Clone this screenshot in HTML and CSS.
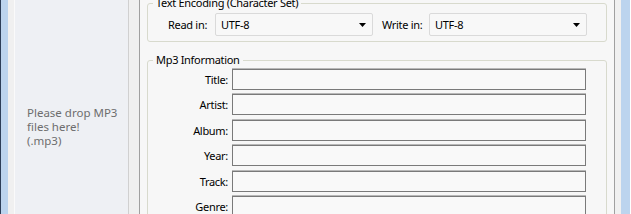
FILE: index.html
```html
<!DOCTYPE html>
<html lang="en">
<head>
    <meta charset="UTF-8">
    <title>MP3 Tag Editor</title>
    <link rel="stylesheet" href="styles.css">
</head>
<body>
    <div class="frame-left"></div>

    <div class="drop-area">
        <div class="drop-panel">
            <p>Please drop MP3<br>files here!<br>(.mp3)</p>
        </div>
    </div>

    <div class="main">
        <fieldset class="group encoding">
            <legend>Text Encoding (Character Set)</legend>
            <div class="enc-row">
                <span class="enc-label first">Read in:</span>
                <div class="combo">
                    <span>UTF-8</span>
                    <svg width="7" height="4" viewBox="0 0 7 4"><path d="M0 0h7L3.5 4z" fill="#000"/></svg>
                </div>
                <span class="enc-label second">Write in:</span>
                <div class="combo">
                    <span>UTF-8</span>
                    <svg width="7" height="4" viewBox="0 0 7 4"><path d="M0 0h7L3.5 4z" fill="#000"/></svg>
                </div>
            </div>
        </fieldset>

        <fieldset class="group info">
            <legend>Mp3 Information</legend>
            <div class="info-grid">
                <label for="title">Title:</label>
                <input id="title" type="text">
                <label for="artist">Artist:</label>
                <input id="artist" type="text">
                <label for="album">Album:</label>
                <input id="album" type="text">
                <label for="year">Year:</label>
                <input id="year" type="text">
                <label for="track">Track:</label>
                <input id="track" type="text">
                <label for="genre">Genre:</label>
                <input id="genre" type="text">
            </div>
        </fieldset>
    </div>

    <div class="splitter-right"></div>
    <div class="frame-right"></div>
</body>
</html>
```

FILE: styles.css
```css
body {
    margin: 0;
    width: 631px;
    height: 214px;
    overflow: hidden;
    display: flex;
    font-family: "Noto Sans", sans-serif;
    font-size: 11px;
    letter-spacing: -0.3px;
    color: #000;
}

.frame-left {
    width: 7px;
    border-left: 1px solid #2c3e58;
    background: #bcd4ee;
    flex-shrink: 0;
}

.drop-area {
    width: 132px;
    box-sizing: border-box;
    padding: 0 10px 0 6px;
    background: #f0f0f0;
    border-right: 1px solid #a0a0a0;
    flex-shrink: 0;
}

.drop-panel {
    height: 100%;
    box-sizing: border-box;
    border-left: 1px solid #fafafa;
    border-right: 1px solid #d0d0d0;
    background: #eef0f4;
    padding: 106px 0 0 12px;
}

.drop-panel p {
    margin: 0;
    color: #6d6d6d;
    font-size: 11.5px;
    line-height: 14px;
    letter-spacing: 0;
    white-space: nowrap;
}

.main {
    width: 474px;
    box-sizing: border-box;
    padding: 0 7px;
    background: #f7f7f7;
    flex-shrink: 0;
}

.group {
    margin: 0;
    padding: 0;
    border: 1px solid #d8dacd;
    border-radius: 3px;
}

.group legend {
    margin-left: 5px;
    padding: 0 3px;
    line-height: 14px;
}

.encoding {
    margin-top: -4px;
}

.enc-row {
    display: flex;
    align-items: center;
    padding: 3px 0 5px 20px;
    white-space: nowrap;
}

.enc-label.first {
    width: 40px;
    margin-right: 7px;
}

.enc-label.second {
    width: 43px;
    margin-left: 9px;
    margin-right: 4px;
}

.combo {
    width: 158px;
    height: 23px;
    box-sizing: border-box;
    border: 1px solid #dadada;
    border-radius: 2px;
    background: #f8f8f8;
    display: flex;
    align-items: center;
    justify-content: space-between;
    padding: 0 6px 0 5px;
}

.info {
    margin-top: 11px;
    height: 200px;
}

.info-grid {
    display: grid;
    grid-template-columns: 80px 354px;
    column-gap: 4px;
    row-gap: 4.4px;
    padding-top: 2px;
    align-items: center;
    white-space: nowrap;
}

.info-grid label {
    text-align: right;
}

.info-grid input {
    height: 21px;
    box-sizing: border-box;
    margin: 0;
    border: 1px solid #7a7a7a;
    border-radius: 0;
    background: #f9f9f9;
    box-shadow: 0 -1px 0 #b8b8b8;
    font: inherit;
}

.splitter-right {
    width: 6px;
    border-left: 1px solid #a0a0a0;
    background: #f0f0f0;
    flex-shrink: 0;
}

.frame-right {
    width: 9px;
    background: #bcd4ee;
    flex-shrink: 0;
}
```
